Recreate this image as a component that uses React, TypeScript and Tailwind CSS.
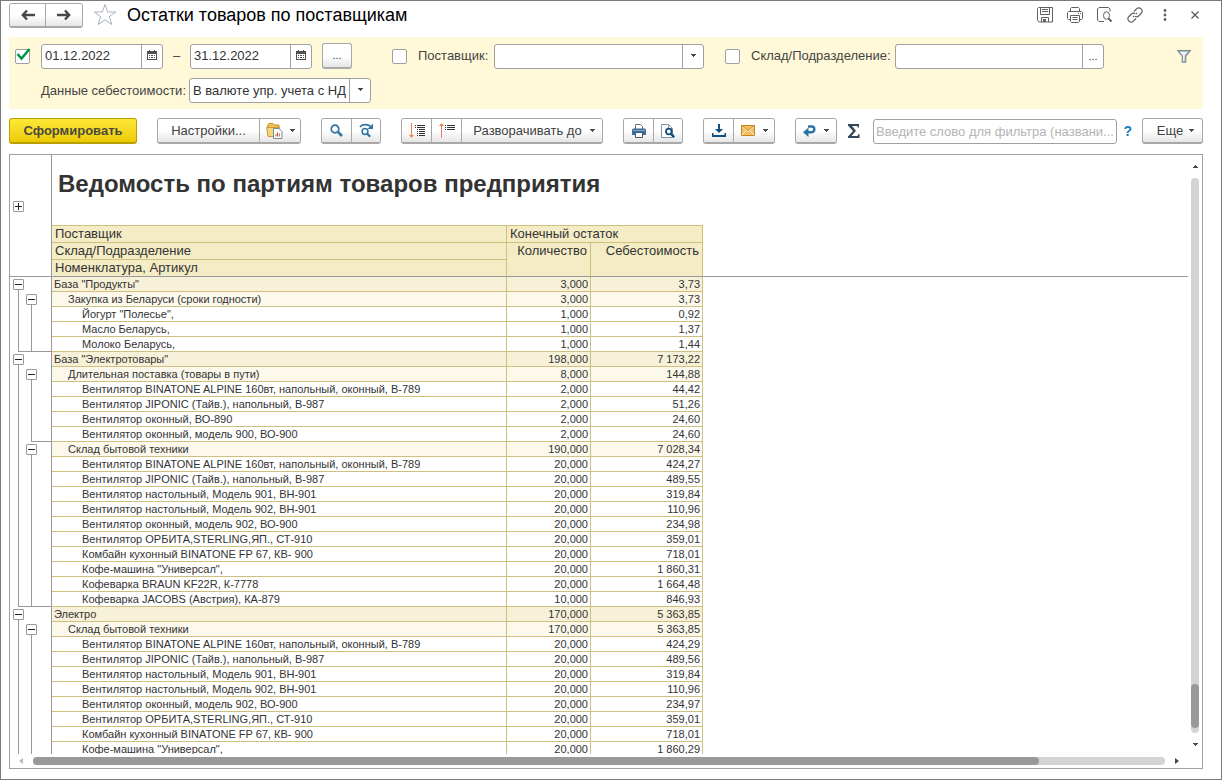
import React from "react";

type Level = 0 | 1 | 2;
type Row = [level: Level, name: string, qty: string, cost: string];

const rows: Row[] = [
  [0, 'База "Продукты"', "3,000", "3,73"],
  [1, "Закупка из Беларуси (сроки годности)", "3,000", "3,73"],
  [2, 'Йогурт "Полесье",', "1,000", "0,92"],
  [2, "Масло Беларусь,", "1,000", "1,37"],
  [2, "Молоко Беларусь,", "1,000", "1,44"],
  [0, 'База "Электротовары"', "198,000", "7 173,22"],
  [1, "Длительная поставка (товары в пути)", "8,000", "144,88"],
  [2, "Вентилятор BINATONE ALPINE 160вт, напольный, оконный, В-789", "2,000", "44,42"],
  [2, "Вентилятор JIPONIC (Тайв.), напольный, В-987", "2,000", "51,26"],
  [2, "Вентилятор оконный, ВО-890", "2,000", "24,60"],
  [2, "Вентилятор оконный, модель 900, ВО-900", "2,000", "24,60"],
  [1, "Склад бытовой техники", "190,000", "7 028,34"],
  [2, "Вентилятор BINATONE ALPINE 160вт, напольный, оконный, В-789", "20,000", "424,27"],
  [2, "Вентилятор JIPONIC (Тайв.), напольный, В-987", "20,000", "489,55"],
  [2, "Вентилятор настольный, Модель 901, ВН-901", "20,000", "319,84"],
  [2, "Вентилятор настольный, Модель 902, ВН-901", "20,000", "110,96"],
  [2, "Вентилятор оконный, модель 902, ВО-900", "20,000", "234,98"],
  [2, "Вентилятор ОРБИТА,STERLING,ЯП., СТ-910", "20,000", "359,01"],
  [2, "Комбайн кухонный BINATONE FP 67, КВ- 900", "20,000", "718,01"],
  [2, 'Кофе-машина "Универсал",', "20,000", "1 860,31"],
  [2, "Кофеварка BRAUN KF22R, К-7778", "20,000", "1 664,48"],
  [2, "Кофеварка JACOBS (Австрия), КА-879", "10,000", "846,93"],
  [0, "Электро", "170,000", "5 363,85"],
  [1, "Склад бытовой техники", "170,000", "5 363,85"],
  [2, "Вентилятор BINATONE ALPINE 160вт, напольный, оконный, В-789", "20,000", "424,29"],
  [2, "Вентилятор JIPONIC (Тайв.), напольный, В-987", "20,000", "489,56"],
  [2, "Вентилятор настольный, Модель 901, ВН-901", "20,000", "319,84"],
  [2, "Вентилятор настольный, Модель 902, ВН-901", "20,000", "110,96"],
  [2, "Вентилятор оконный, модель 902, ВО-900", "20,000", "234,97"],
  [2, "Вентилятор ОРБИТА,STERLING,ЯП., СТ-910", "20,000", "359,01"],
  [2, "Комбайн кухонный BINATONE FP 67, КВ- 900", "20,000", "718,01"],
  [2, 'Кофе-машина "Универсал",', "20,000", "1 860,29"],
];

const rowFill = ["bg-[#f7f1d9]", "bg-[#fcf9ec]", "bg-white"];
const rowIndent = ["pl-[2px]", "pl-4", "pl-[30px]"];

/* ---------- icons ---------- */

const Caret = () => (
  <svg width="5" height="3" viewBox="0 0 5 3" className="shrink-0" shapeRendering="crispEdges" aria-hidden="true">
    <path d="M0 0h5v1H4v1H3v1H2V2H1V1H0z" fill="#484848" />
  </svg>
);

const ArrowIcon = ({ back = false }: { back?: boolean }) => (
  <svg width="14" height="12" viewBox="0 0 14 12" aria-hidden="true">
    <path
      d={back ? "M6 1.5 1.8 6 6 10.5M2 6h12" : "M8 1.5 12.2 6 8 10.5M12 6H0"}
      fill="none"
      stroke="#484848"
      strokeWidth="2.400"
    />
  </svg>
);

const StarIcon = () => (
  <svg width="24" height="24" viewBox="0 0 24 24" aria-hidden="true">
    <path
      d="M12 1.500 14.700 9h8L16.300 13.700 18.800 21.500 12 16.800 5.200 21.500 7.700 13.700 1.300 9h8z"
      fill="#fff"
      stroke="#a9b2ba"
      strokeWidth="1"
    />
  </svg>
);

const CalendarIcon = () => (
  <svg width="10" height="10" viewBox="0 0 10 10" shapeRendering="crispEdges" aria-hidden="true">
    <path d="M0 1h10v9H0z" fill="#505050" />
    <path d="M2 0h1v2H2zM7 0h1v2H7z" fill="#505050" />
    <path d="M1 4h8v5H1z" fill="#fff" />
    <path d="M2 5h1v1H2zM4 5h2v1H4zM7 5h1v1H7zM2 7h1v1H2zM4 7h2v1H4zM7 7h1v1H7z" fill="#505050" />
  </svg>
);

const SaveIcon = () => (
  <svg width="16" height="16" viewBox="0 0 16 16" fill="none" stroke="#606060" aria-hidden="true">
    <path d="M.5 1.500v12l1.500 1.500h13.500V.5H1.500z" />
    <path d="M3.500.5v7h9v-7M5 2.500h6M5 4.500h6M4.500 15v-4.500h7V15" />
    <path d="M6 12h3v3H6z" fill="#606060" stroke="none" />
  </svg>
);

const PrinterLineIcon = () => (
  <svg width="16" height="16" viewBox="0 0 16 16" fill="none" stroke="#606060" aria-hidden="true">
    <path d="M3.500 4.500v-3l1-1h7l1 1v3M3.500 12.500h-2l-1-1v-6l1-1h13l1 1v6l-1 1h-2" />
    <path d="M3.500 8.500h9v6l-1 1h-7l-1-1zM5.500 10.500h5M5.500 12.500h5M11 6.500h1M13 6.500h1" />
  </svg>
);

const PreviewLineIcon = () => (
  <svg width="16" height="16" viewBox="0 0 16 16" fill="none" stroke="#606060" aria-hidden="true">
    <path d="M7 14.500H2l-1.500-1.500V2L2 .5h9.500l1.500 1.500v2.500" />
    <ellipse cx="9.500" cy="8.500" rx="3" ry="3.800" />
    <path d="M11.500 11.500 14.500 14.500" strokeWidth="2" />
  </svg>
);

const LinkIcon = () => (
  <svg width="16" height="16" viewBox="0 0 16 16" fill="none" stroke="#606060" strokeWidth="1.200" aria-hidden="true">
    <path d="M7 4.500 9.800 1.700a2.800 2.800 0 0 1 4 0l.5.5a2.800 2.800 0 0 1 0 4L11.500 9a2.800 2.800 0 0 1-3.500.3" />
    <path d="M9 11.500 6.200 14.300a2.800 2.800 0 0 1-4 0l-.5-.5a2.800 2.800 0 0 1 0-4L4.500 7A2.800 2.800 0 0 1 8 6.700" />
    <path d="M6 10 7.200 8.800M8.800 7.200 10 6" />
  </svg>
);

const DotsIcon = () => (
  <svg width="4" height="12" viewBox="0 0 4 12" fill="#606060" aria-hidden="true">
    <circle cx="2" cy="1.500" r="1.400" />
    <circle cx="2" cy="6" r="1.400" />
    <circle cx="2" cy="10.500" r="1.400" />
  </svg>
);

const CloseIcon = () => (
  <svg width="8" height="8" viewBox="0 0 8 8" stroke="#555" strokeWidth="1.200" aria-hidden="true">
    <path d="M.5.5l7 7M7.500.5l-7 7" />
  </svg>
);

const FunnelIcon = () => (
  <svg width="14" height="13" viewBox="0 0 14 13" aria-hidden="true">
    <path d="M.7.7h12.600L8.700 6v6.200H5.300V6z" fill="#c3ced6" stroke="#7c8a95" strokeWidth="1.200" />
    <path d="M3 2h7L7.500 5.500 7 11H6V6z" fill="#eef2f5" />
  </svg>
);

const FolderReportIcon = () => (
  <svg width="17" height="17" viewBox="0 0 17 17" aria-hidden="true">
    <path d="M1.500 3.500 3 1.500h4l1.500 1.500H13v3H1.500z" fill="#eec24f" stroke="#c08f2c" />
    <path d="M.7 5.500h12.800v9H2z" fill="#f6d67e" stroke="#c9993a" />
    <path d="M7.500 6.500h5.500l3 3v7H7.500z" fill="#fff" stroke="#7b8c99" />
    <path d="M9.500 12h1v2.500h-1z" fill="#2f9a4f" />
    <path d="M11 10.500h1v4h-1z" fill="#e05038" />
    <path d="M12.800 11.500h1v3h-1z" fill="#e05038" />
  </svg>
);

const SearchIcon = () => (
  <svg width="13" height="13" viewBox="0 0 13 13" fill="none" stroke="#2f73a3" aria-hidden="true">
    <circle cx="5" cy="5" r="3.800" strokeWidth="1.700" />
    <path d="M8 8l4 4" strokeWidth="2.500" />
  </svg>
);

const SearchNextIcon = () => (
  <svg width="15" height="15" viewBox="0 0 15 15" fill="none" stroke="#2f73a3" aria-hidden="true">
    <path d="M1 4C3 1 9 .8 11.500 3.500" strokeWidth="1.700" />
    <path d="M14 .5v5.500H8.500z" fill="#2f73a3" stroke="none" />
    <circle cx="6" cy="8.500" r="2.900" strokeWidth="1.500" />
    <path d="M8.200 10.700l3 3" strokeWidth="2.200" />
  </svg>
);

const ExpandIcon = () => (
  <svg width="16" height="16" viewBox="0 0 16 16" aria-hidden="true">
    <path d="M2.500 0v13" stroke="#f0814f" />
    <path d="M0 12h5l-2.500 3z" fill="#f0814f" />
    <path
      d="M6 2.500h1M8 2.500h8M6 4.500h1M8 4.500h8M8 6.500h1M10 6.500h6M8 8.500h1M10 8.500h6M8 10.500h1M10 10.500h6M8 12.500h1M10 12.500h6"
      stroke="#333"
    />
  </svg>
);

const CollapseIcon = () => (
  <svg width="16" height="16" viewBox="0 0 16 16" aria-hidden="true">
    <path d="M2.500 2v13" stroke="#f0814f" />
    <path d="M0 3h5L2.500 0z" fill="#f0814f" />
    <path d="M6 2.500h1M8 2.500h8M6 4.500h1M8 4.500h8M6 6.500h1M8 6.500h8" stroke="#333" />
  </svg>
);

const PrintIcon = () => (
  <svg width="14" height="14" viewBox="0 0 14 14" aria-hidden="true">
    <path d="M3.500 5V.5h5l2 2V5" fill="#fff" stroke="#5c7285" />
    <path d="M1 4.500h12l1 1V11H0V5.500z" fill="#3f6d96" />
    <path d="M1 6h12v1H1z" fill="#7fa3c2" />
    <path d="M3.500 8.500h7v5h-7z" fill="#fff" stroke="#3f5a70" />
  </svg>
);

const PreviewIcon = () => (
  <svg width="14" height="14" viewBox="0 0 14 14" fill="none" aria-hidden="true">
    <path d="M.5.5h7l4 4v9H.5z" fill="#fff" stroke="#8496a5" />
    <path d="M7.500.5v4h4" stroke="#8496a5" />
    <circle cx="7.800" cy="7.500" r="2.800" fill="#fff" stroke="#0f4f7f" strokeWidth="1.800" />
    <path d="M10 9.800l3.300 3.400" stroke="#0f4f7f" strokeWidth="2.400" />
  </svg>
);

const DownloadIcon = () => (
  <svg width="14" height="13" viewBox="0 0 14 13" fill="#0f4f7f" aria-hidden="true">
    <path d="M6 0h2v5h3L7 9 3 5h3z" />
    <path d="M0 9h1.500v2h11V9H14v4H0z" />
  </svg>
);

const MailIcon = () => (
  <svg width="14" height="11" viewBox="0 0 14 11" aria-hidden="true">
    <path d="M.5.5h13v10H.5z" fill="#f2bd5a" stroke="#c48524" />
    <path d="M1 1.500l6 5 6-5M1 10l4.500-5M13 10 8.500 5" fill="none" stroke="#fff1cf" />
    <path d="M1 .8 7 5.500 13 .8" fill="none" stroke="#c48524" strokeWidth=".8" />
  </svg>
);

const ReturnIcon = () => (
  <svg width="13" height="12" viewBox="0 0 13 12" aria-hidden="true">
    <path d="M5 1.500h3.500a2.800 2.800 0 0 1 0 5.700H4" fill="none" stroke="#2f73a3" strokeWidth="2.400" />
    <path d="M0 7.200 5.500 2.500v9.400z" fill="#2f73a3" />
  </svg>
);

const SigmaIcon = () => (
  <svg width="12" height="14" viewBox="0 0 12 14" aria-hidden="true">
    <path d="M0 0h11v3.500H9.800L9.300 2H4l4 4.800L3.500 12h6l.7-1.800h1.300V14H0v-1.500L5 7 0 1.500z" fill="#33475a" />
  </svg>
);

/* ---------- controls ---------- */

const face =
  "border-[#a8a8a8] bg-linear-to-b from-white from-50% to-[#e6e6e6] text-[#404040] flex items-center justify-center";

function Group({ children }: { children: React.ReactNode }) {
  return (
    <div className="flex h-[26px] shrink-0 overflow-hidden rounded-[3px] border border-b-2 border-[#a8a8a8] divide-x divide-[#a8a8a8]">
      {children}
    </div>
  );
}

function Btn({ label, className, children }: { label?: string; className: string; children: React.ReactNode }) {
  return (
    <button type="button" aria-label={label} className={`${face} ${className}`}>
      {children}
    </button>
  );
}

const field = "flex h-[25px] overflow-hidden rounded-[3px] border border-[#a0a0a0] bg-white";
const fieldEnd = "flex w-[21px] shrink-0 items-center justify-center border-l border-[#a0a0a0]";

function DateField({ label, value }: { label: string; value: string }) {
  return (
    <div className={`${field} w-[122px] shrink-0`}>
      <input aria-label={label} defaultValue={value} className="min-w-0 flex-1 px-[3px] text-[#333] outline-none" />
      <button type="button" aria-label="Календарь" className={`${fieldEnd} pb-0.5`}>
        <CalendarIcon />
      </button>
    </div>
  );
}

function Check({ id, label, checked = false }: { id: string; label?: string; checked?: boolean }) {
  return (
    <span className="relative flex shrink-0">
      <input
        id={id}
        type="checkbox"
        aria-label={label}
        defaultChecked={checked}
        className="peer size-[15px] appearance-none rounded-[2px] border border-[#a0a0a0] bg-white"
      />
      <svg
        width="15"
        height="13"
        viewBox="0 0 15 13"
        aria-hidden="true"
        className="pointer-events-none absolute left-px -top-px hidden peer-checked:block"
      >
        <path d="M1.500 6 5.500 10.500 13.500 1" fill="none" stroke="#009646" strokeWidth="2.600" />
      </svg>
    </span>
  );
}

function Select({ id, value, className }: { id: string; value: string; className: string }) {
  return (
    <div className={`${field} ${className}`}>
      <div className="grid min-w-0 flex-1 grid-cols-[minmax(0,1fr)_21px]">
        <select
          id={id}
          className="col-span-2 col-start-1 row-start-1 appearance-none overflow-hidden pr-6 pl-[3px] text-clip whitespace-nowrap text-[#333] outline-none"
        >
          <option>{value}</option>
        </select>
        <span className="pointer-events-none col-start-2 row-start-1 flex items-center justify-center border-l border-[#a0a0a0] pb-0.5">
          <Caret />
        </span>
      </div>
    </div>
  );
}

/* ---------- outline gutter ---------- */

function Toggle({ plus = false }: { plus?: boolean }) {
  return (
    <button
      type="button"
      aria-label={plus ? "Развернуть" : "Свернуть"}
      className="flex size-[11px] shrink-0 items-center justify-center rounded-[1px] border border-[#999] bg-white"
    >
      <svg width="7" height="7" viewBox="0 0 7 7" stroke="#222" shapeRendering="crispEdges" aria-hidden="true">
        <path d={plus ? "M0 3.500h7M3.500 0v7" : "M0 3.500h7"} />
      </svg>
    </button>
  );
}

function OpenSlot() {
  return (
    <div className="flex h-full w-[13px] flex-col items-center pt-0.5">
      <Toggle />
      <span className="w-px flex-1 bg-[#999]" />
    </div>
  );
}

function LineSlot({ end, under }: { end: boolean; under: boolean }) {
  return (
    <div className="flex h-full w-[13px]">
      <span className={`w-1.5 border-[#999] ${under ? "border-b" : ""}`} />
      <span className={`w-[7px] border-l border-[#999] ${end ? "border-b" : ""}`} />
    </div>
  );
}

function Gutter({ level, next }: { level: Level; next?: Level }) {
  const endOuter = next === 0;
  const endInner = level === 2 && next !== undefined && next < 2;
  return (
    <div className="flex h-[15px] pl-0.5">
      {level === 0 ? <OpenSlot /> : <LineSlot end={endOuter} under={false} />}
      {level === 0 && <span className="w-[13px]" />}
      {level === 1 && <OpenSlot />}
      {level === 2 && <LineSlot end={endInner} under={endOuter} />}
      <span className={`flex-1 border-[#999] ${endInner ? "border-b" : ""}`} />
    </div>
  );
}

const head = "border-b border-r border-[#cfc07e] bg-[#f4ecc4] font-normal h-[17px] leading-4 px-[3px]";
const cell = "border-b border-r border-[#cfc07e]";

export default function App() {
  return (
    <div className="flex h-screen min-h-0 flex-col border border-[#7a7a7a] bg-white pr-[18px] pb-2.5 pl-2 font-['Liberation_Sans',Arial,sans-serif] text-[13px] text-[#444]">
      <header className="flex h-9 shrink-0 items-center gap-2.5 pb-2">
        <div className="flex h-[25px] divide-x divide-[#d4d4d4] overflow-hidden rounded-[3px] border border-b-2 border-[#a8a8a8]">
          <Btn label="Назад" className="w-9">
            <ArrowIcon back />
          </Btn>
          <Btn label="Вперед" className="w-9">
            <ArrowIcon />
          </Btn>
        </div>
        <button type="button" aria-label="В избранное" className="flex">
          <StarIcon />
        </button>
        <h1 className="flex-1 text-[18px] leading-6 text-black">Остатки товаров по поставщикам</h1>
        <div className="-mr-[7px] flex items-center">
          <button type="button" aria-label="Сохранить" className="flex w-[30px] justify-center"><SaveIcon /></button>
          <button type="button" aria-label="Печать" className="flex w-[30px] justify-center"><PrinterLineIcon /></button>
          <button type="button" aria-label="Просмотр" className="flex w-[30px] justify-center"><PreviewLineIcon /></button>
          <button type="button" aria-label="Ссылка" className="flex w-[30px] justify-center"><LinkIcon /></button>
          <button type="button" aria-label="Меню" className="flex w-[30px] justify-center"><DotsIcon /></button>
          <button type="button" aria-label="Закрыть" className="flex w-[30px] justify-center"><CloseIcon /></button>
        </div>
      </header>

      <section className="flex shrink-0 flex-col gap-[9px] bg-[#fff9d9] pt-1.5 pr-3 pb-1.5 pl-1.5">
        <div className="flex items-center">
          <Check id="period" label="Период" checked />
          <div className="ml-[11px] flex items-center gap-2.5">
            <DateField label="Начало периода" value="01.12.2022" />
            <span className="w-[7px] text-center">–</span>
            <DateField label="Конец периода" value="31.12.2022" />
            <button
              type="button"
              aria-label="Выбрать период"
              className={`${face} h-[26px] w-[30px] rounded-[3px] border border-b-2 text-[11px]`}
            >
              ...
            </button>
          </div>
          <div className="ml-10 flex items-center">
            <Check id="supplier-on" label="Отбор по поставщику" />
            <label htmlFor="supplier" className="ml-[11px] w-[76px]">Поставщик:</label>
            <Select id="supplier" value="" className="w-[210px]" />
          </div>
          <div className="ml-[21px] flex items-center">
            <Check id="store-on" label="Отбор по складу" />
            <label htmlFor="store" className="ml-[11px] w-36">Склад/Подразделение:</label>
            <div className={`${field} w-[209px]`}>
              <input id="store" className="min-w-0 flex-1 px-1 outline-none" />
              <button type="button" aria-label="Выбрать склад" className={`${fieldEnd} text-[11px]`}>...</button>
            </div>
          </div>
          <button type="button" aria-label="Настройка отбора" className="ml-auto flex"><FunnelIcon /></button>
        </div>
        <div className="flex items-center pl-[26px]">
          <label htmlFor="cost" className="w-[148px]">Данные себестоимости:</label>
          <Select id="cost" value="В валюте упр. учета с НДС" className="w-[182px]" />
        </div>
      </section>

      <div className="flex shrink-0 items-center gap-5 pt-[9px] pb-2.5">
        <button
          type="button"
          className="h-[26px] w-32 shrink-0 rounded-[3px] border border-b-2 border-[#b8a000] bg-linear-to-b from-[#ffe835] to-[#eccb00] font-bold text-[#4a4a3a]"
        >
          Сформировать
        </button>
        <Group>
          <Btn className="w-[102px]">Настройки...</Btn>
          <Btn label="Варианты отчета" className="w-10 gap-[7px]"><FolderReportIcon /><Caret /></Btn>
        </Group>
        <Group>
          <Btn label="Найти" className="w-[30px]"><SearchIcon /></Btn>
          <Btn label="Найти далее" className="w-7"><SearchNextIcon /></Btn>
        </Group>
        <Group>
          <Btn label="Развернуть" className="w-[30px]"><ExpandIcon /></Btn>
          <Btn label="Свернуть" className="w-[30px]"><CollapseIcon /></Btn>
          <Btn className="w-[140px] gap-2 pl-1">Разворачивать до<Caret /></Btn>
        </Group>
        <Group>
          <Btn label="Печать отчета" className="w-[30px]"><PrintIcon /></Btn>
          <Btn label="Предпросмотр" className="w-7"><PreviewIcon /></Btn>
        </Group>
        <Group>
          <Btn label="Сохранить как" className="w-[30px]"><DownloadIcon /></Btn>
          <Btn label="Отправить" className="w-10 gap-2"><MailIcon /><Caret /></Btn>
        </Group>
        <Group>
          <Btn label="Вернуться" className="w-10 gap-2"><ReturnIcon /><Caret /></Btn>
        </Group>
        <div className="-ml-3.5 flex flex-1 items-center gap-1.5">
          <button type="button" aria-label="Сумма" className="mr-0.5 flex w-[22px] shrink-0 justify-center"><SigmaIcon /></button>
          <input
            aria-label="Фильтр"
            placeholder="Введите слово для фильтра (названи..."
            className="h-[25px] min-w-0 flex-1 rounded-[3px] border border-[#a0a0a0] px-0.5 outline-none placeholder:text-[#b4b4b4]"
          />
          <a href="#help" className="text-[14px] font-bold text-[#1878b8]">?</a>
          <button
            type="button"
            className={`${face} ml-1 h-[26px] w-[61px] shrink-0 gap-1.5 rounded-[3px] border border-b-2 pl-1.5`}
          >
            Еще
            <Caret />
          </button>
        </div>
      </div>

      <main className="flex min-h-0 flex-1 flex-col border border-[#a0a0a0]">
        <div className="flex min-h-0 flex-1">
          <div className="min-w-0 flex-1 overflow-hidden text-[#333]">
            <div className="flex h-[70px]">
              <div className="flex w-[42px] shrink-0 items-end border-r border-[#999] pb-[13px] pl-[3px]">
                <span className="flex w-full"><Toggle plus /></span>
              </div>
              <h2 className="pt-[14px] pl-1.5 text-[24px] leading-[30px] font-bold whitespace-nowrap">
                Ведомость по партиям товаров предприятия
              </h2>
            </div>
            <table className="w-full table-fixed border-separate border-spacing-0 text-[11px]">
              <colgroup>
                <col className="w-[42px]" />
                <col className="w-[455px]" />
                <col className="w-[84px]" />
                <col className="w-[112px]" />
                <col />
              </colgroup>
              <thead className="text-left text-[13px]">
                <tr>
                  <td rowSpan={3} className="border-r border-b border-[#999] p-0" />
                  <th className={`${head} border-t`}>Поставщик</th>
                  <th colSpan={2} className={`${head} border-t`}>Конечный остаток</th>
                  <td rowSpan={3} className="border-b border-[#999] p-0" />
                </tr>
                <tr>
                  <th className={head}>Склад/Подразделение</th>
                  <th rowSpan={2} className={`${head} border-b-[#999] text-right align-top`}>Количество</th>
                  <th rowSpan={2} className={`${head} border-b-[#999] text-right align-top`}>Себестоимость</th>
                </tr>
                <tr>
                  <th className={`${head} border-b-[#999]`}>Номенклатура, Артикул</th>
                </tr>
              </thead>
              <tbody>
                {rows.map(([level, name, qty, cost], i) => (
                  <tr key={i} className="h-[15px] leading-[14px]">
                    <td className="border-r border-[#999] p-0">
                      <Gutter level={level} next={rows[i + 1]?.[0]} />
                    </td>
                    <td className={`${cell} ${rowFill[level]} ${rowIndent[level]} py-0 whitespace-nowrap`}>{name}</td>
                    <td className={`${cell} ${rowFill[level]} py-0 pr-0.5 text-right`}>{qty}</td>
                    <td className={`${cell} ${rowFill[level]} py-0 pr-0.5 text-right`}>{cost}</td>
                    <td className="p-0" />
                  </tr>
                ))}
              </tbody>
            </table>
          </div>
          <div className="flex w-3.5 shrink-0 flex-col items-center gap-2.5 pt-2.5 pb-2" aria-hidden="true">
            <svg width="5" height="3" viewBox="0 0 5 3" shapeRendering="crispEdges"><path d="M0 3h5V2H4V1H3V0H2v1H1v1H0z" fill="#484848" /></svg>
            <div className="flex w-2 flex-1 flex-col justify-end rounded-full bg-[#d4d4d4] pb-[5px]">
              <div className="h-11 rounded-full bg-[#999]" />
            </div>
            <Caret />
          </div>
        </div>
        <div className="flex h-3.5 shrink-0 items-center gap-2.5 pr-[23px] pl-[9px]" aria-hidden="true">
          <svg width="4" height="6" viewBox="0 0 4 6"><path d="M4 0v6L0 3z" fill="#bbb" /></svg>
          <div className="h-2 flex-1 rounded-full bg-[#d4d4d4]">
            <div className="h-2 w-8/9 rounded-full bg-[#999]" />
          </div>
          <svg width="4" height="6" viewBox="0 0 4 6"><path d="M0 0v6l4-3z" fill="#444" /></svg>
        </div>
      </main>
    </div>
  );
}
